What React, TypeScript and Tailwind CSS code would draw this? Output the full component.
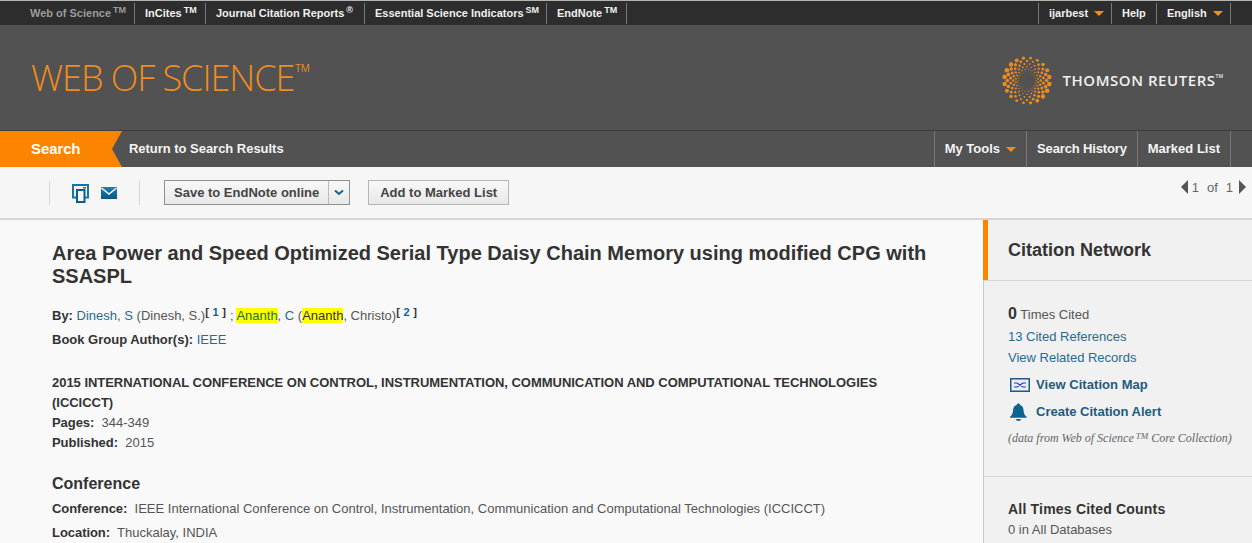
import React from "react";

const rings: [number, number, number, number][] = [
  [9, 26, 0.5, 0],
  [11.2, 20, 0.9, 9],
  [13.8, 20, 1.2, 0],
  [16.6, 20, 1.45, 9],
  [19.6, 20, 1.75, 0],
  [22.6, 20, 2.25, 9],
];

function Logo() {
  const dots: React.ReactNode[] = [];
  rings.forEach(([r, n, d, p], i) => {
    for (let k = 0; k < n; k++) {
      const a = ((k * 360) / n + p) * (Math.PI / 180);
      const x = 25 + r * Math.cos(a);
      const y = 24.5 + r * Math.sin(a);
      const size = d * (0.55 + 0.5 * Math.abs(Math.cos(a - 0.25)));
      dots.push(<circle key={`${i}-${k}`} cx={x} cy={y} r={size} fill="#ec8a20" />);
    }
  });
  return (
    <svg width="50" height="49" viewBox="0 0 50 49" className="shrink-0">
      {dots}
    </svg>
  );
}

function Caret({ className = "" }: { className?: string }) {
  return <span className={`inline-block w-0 h-0 border-x-[5px] border-x-transparent border-t-[5px] border-t-[#f68b1f] ${className}`} />;
}

function TopItem({ children, first, w }: { children: React.ReactNode; first?: boolean; w?: string }) {
  return (
    <div className={`flex items-center shrink-0 whitespace-nowrap h-[21px] border-r border-[#77797b] text-[11px] font-bold ${first ? "text-[#9c9c9c]" : "text-[#f0f0f0]"} ${w ?? "px-[10px]"}`}>
      {children}
    </div>
  );
}

function Tm({ t = "TM" }: { t?: string }) {
  return <span className="text-[9px] font-bold ml-[2px] relative top-[-2px]">{t}</span>;
}

function NavItem({ children, className = "" }: { children: React.ReactNode; className?: string }) {
  return <div className={`flex items-center h-full px-[10px] border-l border-[#77797b] text-[13px] font-bold text-[#f4f4f4] ${className}`}>{children}</div>;
}

const link = "text-[#2a6a8f]";
const hlLink = "bg-[#ffff00] text-[#22702f]";
const hlDark = "bg-[#ffff00] text-[#333]";

function Field({ label, children }: { label: string; children: React.ReactNode }) {
  return (
    <div className="text-[13px] leading-[20px] text-[#555]">
      <span className="font-bold text-[#333] tracking-[-0.05px]">{label}</span>&nbsp; {children}
    </div>
  );
}

function Ref({ n }: { n: number }) {
  return (
    <span className="font-bold text-[11px] text-[#333] relative top-[-4px] tracking-[0.3px]">
      [ <span className="text-[#14618c]">{n}</span> ]
    </span>
  );
}

export default function App() {
  return (
    <div className="w-[1252px] h-[543px] overflow-hidden bg-[#f9f9f9] font-['Liberation_Sans',Arial,sans-serif] text-[#333]">
      {/* product bar */}
      <div className="h-[25px] bg-[#2d2d2d] border-t border-[#b5b5b5] flex items-center justify-between pl-[20px] pr-[21px]">
        <div className="flex items-center">
          <TopItem first w="w-[115px] pl-[10px]">Web of Science<Tm /></TopItem>
          <TopItem w="w-[71px] pl-[10px]">InCites<Tm /></TopItem>
          <TopItem w="w-[159px] pl-[10px]">Journal Citation Reports<Tm t="®" /></TopItem>
          <TopItem w="w-[182px] pl-[10px]">Essential Science Indicators<Tm t="SM" /></TopItem>
          <TopItem w="w-[80px] pl-[10px]">EndNote<Tm /></TopItem>
        </div>
        <div className="flex items-center border-l border-[#77797b]">
          <TopItem w="w-[73px] pl-[10px]">ijarbest<Caret className="ml-[6px]" /></TopItem>
          <TopItem w="w-[45px] pl-[10px]">Help</TopItem>
          <TopItem w="w-[74px] pl-[10px]">English<Caret className="ml-[6px]" /></TopItem>
        </div>
      </div>

      {/* masthead */}
      <div className="h-[106px] bg-[#525252] border-b border-[#3e3e3e] flex items-center justify-between pl-[31px] pr-[29px]">
        <div className="font-['Open_Sans',sans-serif] font-light text-[#f08c1e] text-[36px] leading-none tracking-[-1.05px] flex items-start">
          WEB OF SCIENCE<span className="text-[10px] font-normal mt-[3px] ml-[1px] tracking-normal">TM</span>
        </div>
        <div className="flex items-center gap-[10px] mt-[6px]">
          <Logo />
          <div className="font-['Open_Sans',sans-serif] font-semibold text-[15px] text-[#f0f0f0] tracking-[0.55px] flex items-start">
            THOMSON REUTERS<span className="text-[5px] mt-[4px] tracking-normal">TM</span>
          </div>
        </div>
      </div>

      {/* nav */}
      <div className="h-[36px] bg-[#525252] flex items-center justify-between pr-[21px]">
        <div className="flex items-center h-full">
          <div className="w-[122px] h-full bg-[#fb8500] [clip-path:polygon(0_0,122px_0,112px_50%,122px_100%,0_100%)] flex items-center pl-[31px] text-[15px] tracking-[-0.1px] font-bold text-white">
            Search
          </div>
          <div className="ml-[7px] text-[13px] tracking-[-0.03px] font-bold text-[#f4f4f4]">Return to Search Results</div>
        </div>
        <div className="flex items-center h-full border-r border-[#77797b]">
          <NavItem>My Tools<Caret className="ml-[6px]" /></NavItem>
          <NavItem className="tracking-[-0.15px]">Search History</NavItem>
          <NavItem>Marked List</NavItem>
        </div>
      </div>

      {/* toolbar */}
      <div className="h-[53px] bg-[#f6f6f6] border-b-2 border-[#d6d6d6] flex items-start pl-[49px] pr-[6px] pt-[14px]">
        <div className="flex items-center h-[24px] border-x border-[#d5d5d5] w-[91px] pl-[22px] gap-[12px]">
          <svg width="17" height="19" viewBox="0 0 17 19">
            <path d="M4.500 13.500H1V1h15v12.500h-3.500" fill="none" stroke="#0f78a8" strokeWidth="2" />
            <rect x="5" y="6" width="7.500" height="12" fill="#f6f6f6" stroke="#0d5f88" strokeWidth="2" />
            <rect x="11" y="3" width="3" height="1.500" fill="#0f78a8" />
          </svg>
          <svg width="16" height="12" viewBox="0 0 16 12">
            <defs>
              <linearGradient id="env" x1="0" y1="0" x2="0" y2="1">
                <stop offset="0" stopColor="#1a7fb0" />
                <stop offset="1" stopColor="#0b5880" />
              </linearGradient>
            </defs>
            <rect width="16" height="12" fill="url(#env)" />
            <path d="M0.500 1 L8 7 L15.500 1" fill="none" stroke="#f6f6f6" strokeWidth="1.600" />
          </svg>
        </div>
        <div className="flex items-center ml-[24px] h-[25px] border border-[#909090] bg-gradient-to-b from-[#f8f8f8] to-[#e8e8e8] text-[13px] font-bold text-[#444] -mt-[1px]">
          <span className="px-[9px]">Save to EndNote online</span>
          <span className="h-full w-[21px] border-l border-[#bbb] flex items-center justify-center">
            <svg width="10" height="7" viewBox="0 0 10 7"><path d="M1 1.500 L5 5 L9 1.500" fill="none" stroke="#14618c" strokeWidth="2" /></svg>
          </span>
        </div>
        <div className="flex items-center ml-[18px] h-[25px] px-[11px] border border-[#b5b5b5] bg-gradient-to-b from-[#f8f8f8] to-[#e8e8e8] text-[13px] font-bold text-[#444] -mt-[1px]">
          Add to Marked List
        </div>
        <div className="ml-auto flex items-center text-[13px] text-[#666] -mt-[1px] h-[14px]">
          <span className="w-0 h-0 border-y-[7px] border-y-transparent border-r-[7px] border-r-[#555] mr-[4px]" />
          <span className="mt-[1px]">1</span><span className="ml-[8px] mt-[1px]">of</span><span className="ml-[8px] mt-[1px]">1</span>
          <span className="w-0 h-0 border-y-[7px] border-y-transparent border-l-[7px] border-l-[#555] ml-[6px]" />
        </div>
      </div>

      <div className="flex">
        {/* main record */}
        <div className="w-[983px] pl-[52px] pr-[45px] pt-[22px]">
          <h1 className="text-[20px] leading-[23px] font-bold text-[#333]">
            Area Power and Speed Optimized Serial Type Daisy Chain Memory using modified CPG with SSASPL
          </h1>
          <div className="mt-[16px] text-[13px] leading-[24px] text-[#555]">
            <div>
              <span className="font-bold text-[#333]">By:</span> <span className={link}>Dinesh, S</span> (Dinesh, S.)<Ref n={1} /> ; <span className={hlLink}>Ananth</span><span className={link}>, C</span> (<span className={hlDark}>Ananth</span>, Christo)<Ref n={2} />
            </div>
            <div>
              <span className="font-bold text-[#333]">Book Group Author(s):</span> <span className={link}>IEEE</span>
            </div>
          </div>
          <div className="mt-[21px] leading-[20px] font-bold text-[#333] text-[13px] -tracking-[0.03px]">
            2015 INTERNATIONAL CONFERENCE ON CONTROL, INSTRUMENTATION, COMMUNICATION AND COMPUTATIONAL TECHNOLOGIES (ICCICCT)
          </div>
          <Field label="Pages:">344-349</Field>
          <Field label="Published:">2015</Field>
          <h2 className="mt-[19px] text-[16px] leading-[24px] font-bold text-[#333]">Conference</h2>
          <div className="mt-[3px]">
            <Field label="Conference:">IEEE International Conference on Control, Instrumentation, Communication and Computational Technologies (ICCICCT)</Field>
            <div className="mt-[4px]"><Field label="Location:">Thuckalay, INDIA</Field></div>
          </div>
        </div>

        {/* sidebar */}
        <div className="w-[269px] h-[324px] bg-[#f1f1f1] border-l border-[#c8c8c8]">
          <div className="h-[60px] -ml-[1px] border-l-[5px] border-[#fb8500] pl-[20px] flex items-center text-[18px] font-bold text-[#333]">
            Citation Network
          </div>
          <div className="border-y border-[#d6d6d6] h-[197px] pl-[24px] pt-[22px] text-[13px]">
            <div className="leading-[22px] text-[#555]"><span className="font-bold text-[16px] text-[#333]">0</span> Times Cited</div>
            <div className={`leading-[21px] ${link}`}>13 Cited References</div>
            <div className={`leading-[21px] ${link}`}>View Related Records</div>
            <div className="flex items-center mt-[3px] h-[27px] text-[#1d5b80] font-bold tracking-[0.05px]">
              <svg width="20" height="14" viewBox="0 0 20 14" className="ml-[2px] mr-[6px]">
                <rect x="0.750" y="0.750" width="18.500" height="12.500" fill="#e9eefa" stroke="#1d5b80" strokeWidth="1.500" />
                <path d="M4 5h3M4 9h3M13 5h3M13 9h3M7 5l6 4M7 9l6-4" stroke="#2b3fb5" strokeWidth="1.200" fill="none" />
              </svg>
              View Citation Map
            </div>
            <div className="flex items-center h-[27px] text-[#1d5b80] font-bold">
              <svg width="17" height="18" viewBox="0 0 17 18" className="ml-[2px] mr-[9px]">
                <path d="M8.500 0.500c1 0 1.500.7 1.500 1.500 2.600.7 3.400 3 3.600 5.500.2 3 1 4.600 3 6.300v1H0v-1c2-1.700 2.800-3.300 3-6.300C3.200 5 4 2.700 6.700 2 6.700 1.200 7.500.5 8.500.5z" fill="#0d6491" />
                <path d="M6 16h5a2.500 2 0 0 1-5 0z" fill="#0d6491" />
              </svg>
              Create Citation Alert
            </div>
            <div className="mt-[4px] font-['Liberation_Serif',serif] italic text-[12px] text-[#666]">
              (data from Web of Science<span className="text-[9px] relative top-[-3px] ml-[2px]">TM</span> Core Collection)
            </div>
          </div>
          <div className="pl-[24px] pt-[22px] text-[13px]">
            <div className="font-bold text-[14px] tracking-[0.2px] leading-[20px] text-[#333]">All Times Cited Counts</div>
            <div className="leading-[21px] text-[#555]">0 in All Databases</div>
          </div>
        </div>
      </div>
    </div>
  );
}
